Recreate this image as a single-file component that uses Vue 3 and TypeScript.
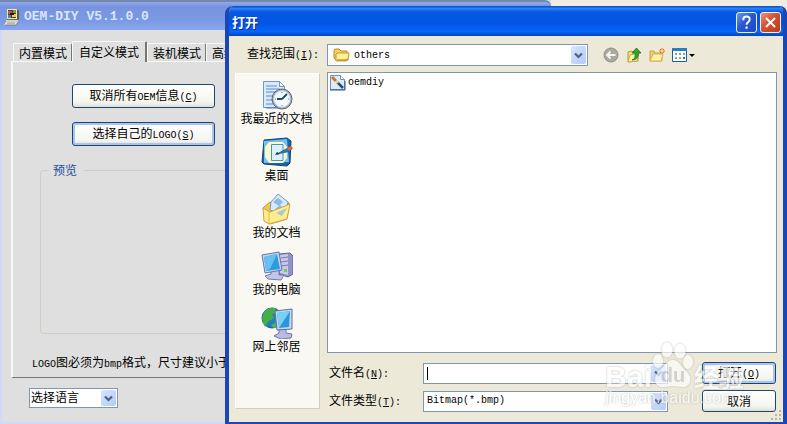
<script setup lang="ts">
import { ref } from 'vue'

interface Place {
  id: string
  label: string
}

const tabs = ['内置模式', '自定义模式', '装机模式', '高级模式']
const activeTab = ref(1)
const language = ref('选择语言')
const folder = ref('others')
const fileName = ref('')
const fileType = ref('Bitmap(*.bmp)')
const places: Place[] = [
  { id: 'recent', label: '我最近的文档' },
  { id: 'desktop', label: '桌面' },
  { id: 'documents', label: '我的文档' },
  { id: 'computer', label: '我的电脑' },
  { id: 'network', label: '网上邻居' },
]
</script>

<template>
  <div class="desktop">
    <section class="app-window" aria-label="OEM-DIY V5.1.0.0">
      <header class="app-title">
        <svg class="app-icon" viewBox="0 0 16 18" aria-hidden="true">
          <path d="M3 1h10v10H3z" fill="#efe6bd" />
          <path d="M13 1l2 2v9l-2-1z" fill="#5d5b4c" />
          <path d="M4 2h8v8H4z" fill="#4a4530" />
          <path d="M4 3h4v3H4z" fill="#c9583a" />
          <path d="M9 2h3v3H9z" fill="#8a8f3a" />
          <path d="M4 7h3v3H4z" fill="#4f86a3" />
          <path d="M8 6h4v3H8z" fill="#f0c84a" />
          <path d="M6 5h4v2H6z" fill="#1d1a12" />
          <path d="M3 11h11v1H3z" fill="#6c6a5a" />
          <path d="M2 12h12v2H2z" fill="#d8d3bd" />
          <path d="M2 14h12l-2 3H0z" fill="#ece8da" />
          <path d="M3 15h8M1 17h11l2-3" fill="none" stroke="#6e7788" stroke-width=".8" />
        </svg>
        <h1>OEM-DIY V5.1.0.0</h1>
      </header>
      <div class="app-body">
        <div class="tabs" role="tablist">
          <button
            v-for="(tab, i) in tabs"
            :key="tab"
            type="button"
            role="tab"
            class="tab"
            :class="{ active: i === activeTab }"
            :aria-selected="i === activeTab"
            @click="activeTab = i"
          >{{ tab }}</button>
        </div>
        <div class="panel" role="tabpanel">
          <div class="actions">
            <button type="button" class="xp-button">取消所有<span class="en">OEM</span>信息<span class="en">(<u>C</u>)</span></button>
            <button type="button" class="xp-button focus">选择自己的<span class="en">LOGO(<u>S</u>)</span></button>
          </div>
          <fieldset class="preview"><legend>预览</legend></fieldset>
          <p class="hint"><span class="en">LOGO</span>图必须为<span class="en">bmp</span>格式，尺寸建议小于</p>
        </div>
        <div class="combo language">
          <select v-model="language" aria-label="选择语言"><option>选择语言</option></select>
          <span class="arrow"><svg viewBox="0 0 9 7" aria-hidden="true"><path d="M1 1.5l3.5 3.5L8 1.5" /></svg></span>
        </div>
      </div>
    </section>

    <section class="dialog" role="dialog" aria-labelledby="dialog-title">
      <header class="dialog-title">
        <h2 id="dialog-title">打开</h2>
        <button type="button" class="caption help" aria-label="帮助">
          <svg viewBox="0 0 21 21" aria-hidden="true"><path d="M7 8V7q0-3 3.6-3T14 7q0 2-1.6 3-1.8 1-1.8 3" /><path d="M10.6 15v2.4" /></svg>
        </button>
        <button type="button" class="caption close" aria-label="关闭">
          <svg viewBox="0 0 21 21" aria-hidden="true"><path d="M5.5 5.5l10 10M15.5 5.5l-10 10" /></svg>
        </button>
      </header>
      <div class="dialog-body">
        <div class="look-row">
          <label for="folder">查找范围<span class="en">(<u>I</u>):</span></label>
          <div class="combo folder">
            <svg class="folder-icon" viewBox="0 0 17 16" aria-hidden="true">
              <path d="M1 4q0-2 2-2h3l2 2h6v9H3L1 11z" fill="#f5d35d" stroke="#b38a22" />
              <path d="M4 6h12l-1 7-2 1H3V7z" fill="#ffee98" stroke="#c29a2e" />
              <path d="M4 13h9l2-1" stroke="#9f781c" fill="none" />
            </svg>
            <select id="folder" v-model="folder" class="latin"><option>others</option></select>
            <span class="arrow"><svg viewBox="0 0 9 7" aria-hidden="true"><path d="M1 1.5l3.5 3.5L8 1.5" /></svg></span>
          </div>
          <div class="tools">
            <button type="button" aria-label="后退" disabled>
              <svg viewBox="0 0 16 16"><circle cx="8" cy="8" r="7" fill="#aaa9a1" stroke="#8e8d88" /><path d="M12.5 8H4M7.5 4.5L4 8l3.5 3.5" fill="none" stroke="#f5f4ee" stroke-width="1.8" /></svg>
            </button>
            <button type="button" aria-label="向上一级">
              <svg viewBox="0 0 16 16"><path d="M2 5l4-1 1 1h5v9L2 15z" fill="#f5dd77" stroke="#b39a43" /><path d="M4 8l9-2-2 8-9 1z" fill="#fff3a5" stroke="#c7ad51" /><path d="M6 13q4-1 3-7H6l4.500-5L15 6h-2.500q0 7-6.500 7z" fill="#36a52d" stroke="#19731d" stroke-width=".8" /></svg>
            </button>
            <button type="button" aria-label="新建文件夹">
              <svg viewBox="0 0 16 16"><path d="M1 4h4l1 2h7v8H1z" fill="#f2ce61" stroke="#c9a348" /><path d="M4 7h10l-2 7H1z" fill="#fff2a6" stroke="#d3b257" /><path d="M13 1v6M10 4h6M11 2l4 4M15 2l-4 4" stroke="#e6682c" /><circle cx="13" cy="4" r="1.2" fill="#ffe35b" /></svg>
            </button>
            <button type="button" class="view" aria-label="查看菜单">
              <svg viewBox="0 0 23 16"><path d="M.5 1.5h14v13H.5z" fill="#fff" stroke="#19629b" /><path d="M0 1h15v3H0z" fill="#2780ba" /><path d="M3 6h2v2H3zM11 6h2v2h-2zM7 10h2v2H7z" fill="#77a6b8" /><path d="M7 6h2v2H7zM3 10h2v2H3z" fill="#7eac86" /><path d="M11 10h2v2h-2z" fill="#466985" /><path d="M17 7h6l-3 3z" fill="#000" /></svg>
            </button>
          </div>
        </div>

        <div class="main">
          <nav class="places" aria-label="位置">
            <button v-for="place in places" :key="place.id" type="button" class="place">
              <svg v-if="place.id === 'recent'" viewBox="0 0 32 32">
                <path d="M2.500 2.500h16l5 5v21h-21z" fill="#dbeafb" stroke="#6f96c5" />
                <path d="M18.500 2.500l5 5h-5z" fill="#fff" stroke="#6f96c5" />
                <path d="M5 7h11M5 10h14M5 13h10M5 17h8M5 21h7M5 25h8" stroke="#82aadf" stroke-width="1.500" />
                <path d="M4 28.500h18l4 1H6z" fill="#497abc" />
                <circle cx="21" cy="20" r="10" fill="#a8afb7" stroke="#5b6774" />
                <circle cx="21" cy="20" r="8" fill="#f2fafd" stroke="#d9e4ea" />
                <path d="M21 20l5-5M21 20h-5" stroke="#174d67" stroke-width="1.800" />
                <path d="M21 13v1M21 26v1M14 20h1M27 20h1" stroke="#4b8098" />
              </svg>
              <svg v-else-if="place.id === 'desktop'" viewBox="0 0 32 32">
                <path d="M3 4l23-2 4 3-1 22-3 3-23-2-2-2z" fill="#1d639f" stroke="#124778" />
                <path d="M3 5l23-2 2 23-25 1z" fill="#6fc1ee" />
                <path d="M8 6h14l4 5v11l-4 5H8l-4-6V11z" fill="#fff7c8" />
                <path d="M10.500 8.500H22v16H10.500z" fill="#dcf1fc" stroke="#4693c7" />
                <path d="M16 18l9-5 5-2 1 2-5 3z" fill="#2b80bb" stroke="#155387" stroke-width=".7" />
                <path d="M14 19l5-1-3-2z" fill="#183a5b" /><path d="M26 12l4-2 2 2-4 3z" fill="#e76345" />
              </svg>
              <svg v-else-if="place.id === 'documents'" viewBox="0 0 32 32">
                <path d="M2 15l7-6 3 3L24 7l4 3-2 16-17 5z" fill="#f2c94c" stroke="#bc9230" />
                <path d="M17 1l10 8-3 13-15-5 1-8z" fill="#d7eafa" stroke="#719dc9" />
                <path d="M12 9l5-4 5 4-4 4zM14 16l5-4 4 4z" fill="#8bbbe5" />
                <path d="M2 15l7 4 20-8-3 15-18 5-5-3z" fill="#ffec91" stroke="#d1a43b" />
                <path d="M15 20l11-5-5 8z" fill="#a6cad4" /><path d="M8 30V19" stroke="#e5b843" />
              </svg>
              <svg v-else-if="place.id === 'computer'" viewBox="0 0 32 32">
                <path d="M18 4l11-1 3 3v18l-5 3-9-3z" fill="#8f91c9" stroke="#6265a2" />
                <path d="M19 5l8-1v21l-8-2z" fill="#c8c9ec" /><path d="M20 8l7-1M20 12l7-1M20 16l7-1" stroke="#7778aa" />
                <path d="M23 19h3v3h-3z" fill="#74c95d" />
                <path d="M10 20h8v5h5l-3 5-13-1-3-3 6-2z" fill="#c3c4e7" stroke="#7779ad" />
                <path d="M1 5l17-3 3 18-17 3z" fill="#c9d4ee" stroke="#6674b0" />
                <path d="M3 7l13-3 3 15-14 2z" fill="#2e9ae0" /><path d="M3 7l13-3-7 15-4 2z" fill="#65c1f2" />
              </svg>
              <svg v-else viewBox="0 0 32 32">
                <circle cx="11" cy="11" r="10" fill="#227fc0" stroke="#185b98" />
                <path d="M3 5q5-5 11-4l2 5-5 1 2 4-6 4-3 5Q-1 13 3 5z" fill="#45af45" />
                <path d="M10 18l6-3 2 5-5 1z" fill="#50b845" />
                <path d="M18 22h7v4l6 1-1 4-10 1-7-3 5-3z" fill="#b9bce2" stroke="#7477a9" />
                <path d="M14 4l17-2v20l-15 1z" fill="#cbd7ef" stroke="#5670ab" />
                <path d="M16 6l13-2-1 16-10 1z" fill="#2b96df" /><path d="M16 6l13-2-11 17z" fill="#79d0f5" />
              </svg>
              <span>{{ place.label }}</span>
            </button>
          </nav>

          <div class="content">
            <ul class="files" aria-label="文件列表">
              <li>
                <svg viewBox="0 0 17 17" aria-hidden="true">
                  <path d="M1.500 1.500h10l4 4v10h-14z" fill="#dcecfb" stroke="#7193b2" /><path d="M11.500 1.500v4h4" fill="#fff" stroke="#7193b2" />
                  <path d="M1 16h15V7" fill="none" stroke="#2e5578" /><path d="M8 8l6 6" stroke="#294d70" stroke-width="2.500" />
                  <path d="M3 3l4 4" stroke="#c87630" stroke-width="3" /><path d="M7 7l2 2" stroke="#e7d08a" stroke-width="3" />
                </svg>
                <span class="en">oemdiy</span>
              </li>
            </ul>
            <div class="form">
              <label for="file-name">文件名<span class="en">(<u>N</u>):</span></label>
              <div class="combo caret">
                <input id="file-name" v-model="fileName" type="text" autocomplete="off" />
                <button type="button" class="arrow" aria-label="最近的文件名"><svg viewBox="0 0 9 7"><path d="M1 1.5l3.500 3.500L8 1.500" /></svg></button>
              </div>
              <button type="button" class="xp-button focus">打开<span class="en">(<u>O</u>)</span></button>
              <label for="file-type">文件类型<span class="en">(<u>T</u>):</span></label>
              <div class="combo">
                <select id="file-type" v-model="fileType" class="latin"><option>Bitmap(*.bmp)</option></select>
                <span class="arrow"><svg viewBox="0 0 9 7" aria-hidden="true"><path d="M1 1.500l3.500 3.500L8 1.500" /></svg></span>
              </div>
              <button type="button" class="xp-button">取消</button>
            </div>
          </div>
        </div>
        <svg class="grip" viewBox="0 0 12 12" aria-hidden="true">
          <path d="M9 1h2v2H9zM5 5h2v2H5zM9 5h2v2H9zM1 9h2v2H1zM5 9h2v2H5zM9 9h2v2H9z" fill="#b8b4a2" />
        </svg>
      </div>
    </section>

    <div class="watermark">
      <div class="brand">
        <span>Bai</span>
        <span class="paw">
          <svg viewBox="0 0 42 46" aria-hidden="true">
            <ellipse cx="6" cy="19" rx="5" ry="7" /><ellipse cx="15" cy="8" rx="5.500" ry="7.500" />
            <ellipse cx="28" cy="9" rx="5.500" ry="7.500" /><ellipse cx="36" cy="20" rx="5" ry="7" />
            <path d="M21 18c6 0 8 7 13 11 8 7 4 17-4 16-7-1-12-1-18 0C3 46 0 36 7 29c6-5 8-11 14-11z" />
          </svg>
          <b>du</b>
        </span>
        <span class="cn">经验</span>
      </div>
      <div class="site">jingyan.baidu.com</div>
    </div>
  </div>
</template>

<style>
html,
body {
  margin: 0;
}
</style>

<style scoped>
.desktop {
  position: relative;
  min-height: 100vh;
  overflow: hidden;
  background: #efede1;
  color: #000;
  font: 12px/16px "Noto Sans CJK SC", sans-serif;
}
.desktop *,
.desktop *::before {
  box-sizing: border-box;
}
button,
input,
select {
  margin: 0;
  padding: 0;
  border: 0;
  border-radius: 0;
  background: none;
  color: inherit;
  font: inherit;
}
svg {
  display: block;
  flex: none;
}
.en,
.combo .latin {
  font-family: "Liberation Mono", monospace;
  font-size: 10px;
}
u {
  text-underline-offset: 1px;
}

.app-window {
  position: absolute;
  inset: 0 auto 0 0;
  width: 70%;
  display: flex;
  flex-direction: column;
  border: solid #d0dafa;
  border-width: 0 2px 2px;
  background: #dfdfdf;
}
.app-title {
  display: flex;
  align-items: center;
  gap: 4px;
  height: 30px;
  margin: 0 -2px;
  padding: 2px 0 0 4px;
  border-top: 2px solid #7488ad;
  border-radius: 0 6px 0 0;
  background: linear-gradient(#91aae9, #7893df 18%, #7b98e2 65%, #89a7ef);
}
.app-icon {
  width: 16px;
  height: 18px;
}
.app-title h1 {
  margin: 0;
  color: #d8e6ff;
  font: bold 13px/16px "Liberation Mono", monospace;
}
.app-body {
  flex: 1;
  display: flex;
  flex-direction: column;
  padding: 11px 9px 14px;
}
.tabs {
  display: flex;
  align-items: flex-end;
  height: 20px;
  padding-left: 2px;
}
.tab {
  height: 18px;
  padding: 0 4px 0 5px;
  border: solid #f8f8f4;
  border-width: 1px 0 0 1px;
  border-right: 1px solid #77776f;
  border-radius: 2px 2px 0 0;
  line-height: 15px;
}
.tab.active {
  position: relative;
  height: 21px;
  margin: 0 0 -1px;
  padding: 0 6px;
  border-right-width: 2px;
  background: #dfdfdf;
  line-height: 20px;
}
.panel {
  flex: 1;
  display: flex;
  flex-direction: column;
  border: solid #f8f8f4;
  border-width: 1px 0 0 2px;
  border-bottom: 1px solid #77776f;
  padding: 22px 0 4px 27px;
}
.actions {
  display: flex;
  flex-direction: column;
  gap: 14px;
  width: 143px;
  margin-left: 32px;
}
.xp-button {
  height: 24px;
  border: 1px solid #1c4775;
  border-radius: 3px;
  background: linear-gradient(#fff, #f4f4ef 80%, #dfdcd1);
  line-height: 16px;
  white-space: nowrap;
}
.xp-button.focus {
  box-shadow: inset 0 0 0 2px #a8c5ee;
}
.preview {
  flex: 1;
  margin: 16px 0 0;
  padding: 0;
  border: 1px solid #cecec4;
  border-radius: 4px;
}
.preview legend {
  margin-left: 8px;
  padding: 0 7px 0 4px;
  color: #1e4c9a;
}
.hint {
  margin: 20px 0 0 -8px;
  white-space: nowrap;
}

.combo {
  position: relative;
  display: flex;
  min-width: 0;
  height: 21px;
  border: 1px solid #7f98ad;
  background: #fff;
}
.combo select,
.combo input {
  flex: 1;
  min-width: 0;
  padding-left: 3px;
  appearance: none;
  outline: 0;
}
.arrow {
  position: absolute;
  inset: 1px 1px 1px auto;
  display: flex;
  align-items: center;
  justify-content: center;
  width: 15px;
  border-radius: 2px;
  background: linear-gradient(135deg, #d8e4ff, #b4caf7);
  pointer-events: none;
}
.arrow svg {
  width: 9px;
  height: 7px;
}
.arrow path {
  fill: none;
  stroke: #4d6185;
  stroke-width: 2.2;
}
.language {
  width: 89px;
  height: 20px;
  margin: 10px 0 0 18px;
}
.language select {
  padding: 0 0 2px 1px;
}

.dialog {
  position: absolute;
  inset: 6px 0 0 225px;
  display: flex;
  flex-direction: column;
  border: solid #1b46b5;
  border-width: 0 4px 2px;
  border-radius: 8px 7px 0 0;
  background: #ece9d8;
  overflow: hidden;
}
.dialog-title {
  display: flex;
  align-items: center;
  gap: 3px;
  height: 30px;
  margin: 0 -4px;
  padding: 2px 6px 0 7px;
  background: linear-gradient(#0845bb, #2b82f5 8%, #0757e4 20%, #0254e2 55%, #0665fb 85%, #0345c1);
}
.dialog-title h2 {
  flex: 1;
  margin: 0;
  color: #fff;
  font-size: 13px;
  line-height: 18px;
  text-shadow: 1px 1px #0b2f89;
}
.caption {
  width: 21px;
  height: 21px;
  border: 1px solid #e6efff;
  border-radius: 3px;
  background: linear-gradient(135deg, #6c96f2, #2857d2 45%, #1e49c2);
}
.caption svg {
  width: 19px;
  height: 19px;
}
.caption path {
  fill: none;
  stroke: #fff;
  stroke-width: 2.2;
}
.caption.close {
  background: linear-gradient(135deg, #eb9278, #d4502e 45%, #bd3c1f);
}
.dialog-body {
  position: relative;
  flex: 1;
  display: flex;
  flex-direction: column;
  gap: 6px;
  padding: 8px 6px 10px;
}
.look-row {
  display: flex;
  align-items: center;
  height: 22px;
}
.look-row label {
  width: 92px;
  padding: 0 0 2px 12px;
  white-space: nowrap;
}
.folder {
  flex: 0 1 261px;
  height: 22px;
}
.folder-icon {
  position: absolute;
  top: 2px;
  left: 5px;
  width: 17px;
  height: 16px;
}
.folder select {
  padding: 2px 0 0 26px;
}
.tools {
  display: flex;
  gap: 7px;
  margin-left: 15px;
}
.tools svg {
  width: 16px;
  height: 16px;
}
.tools .view svg {
  width: 23px;
}
.main {
  flex: 1;
  display: flex;
  gap: 7px;
}
.places {
  display: flex;
  flex-direction: column;
  gap: 12px;
  width: 85px;
  margin: 1px 0 3px;
  padding: 5px 2px 0 0;
  border: 1px solid #fff;
  border-right-color: #d2cfbf;
  border-bottom-color: #d2cfbf;
  background: #f9f8f3;
}
.place {
  display: flex;
  flex-direction: column;
  align-items: center;
  line-height: 13px;
  white-space: nowrap;
}
.place svg {
  width: 32px;
  height: 32px;
}
.content {
  flex: 1;
  min-width: 0;
  display: flex;
  flex-direction: column;
  gap: 9px;
}
.files {
  flex: 1;
  margin: 0;
  padding: 1px;
  border: 1px solid #7f98ad;
  background: #fff;
  list-style: none;
}
.files li {
  display: flex;
  align-items: center;
  gap: 2px;
}
.files svg {
  width: 17px;
  height: 17px;
}
.form {
  display: grid;
  grid-template-columns: 96px 1fr 74px;
  gap: 6px 0;
  align-items: center;
  padding-right: 1px;
}
.form label {
  padding: 1px 0 0 2px;
}
.form .combo {
  margin-right: 34px;
}
.form .xp-button {
  height: 22px;
}
.caret::before {
  content: "";
  position: absolute;
  top: 3px;
  left: 3px;
  width: 1px;
  height: 13px;
  background: #000;
}
.grip {
  position: absolute;
  right: 1px;
  bottom: 1px;
  width: 12px;
  height: 12px;
}

.watermark {
  position: absolute;
  right: 43px;
  bottom: 16px;
  color: #fff;
  opacity: .68;
  pointer-events: none;
  filter: drop-shadow(0 0 1px #a4a4a0);
}
.brand {
  display: flex;
  align-items: flex-end;
  font: bold 30px/22px "Liberation Sans", sans-serif;
}
.paw {
  position: relative;
  width: 42px;
  height: 46px;
}
.paw svg {
  width: 42px;
  height: 46px;
  fill: #fff;
}
.paw b {
  position: absolute;
  inset: 21px 0 auto;
  color: #c3c6cd;
  font-size: 20px;
  line-height: 24px;
  text-align: center;
}
.cn {
  font: bold 25px/24px "Noto Sans CJK SC", sans-serif;
}
.site {
  font: 16px/20px "Liberation Sans", sans-serif;
}
</style>
